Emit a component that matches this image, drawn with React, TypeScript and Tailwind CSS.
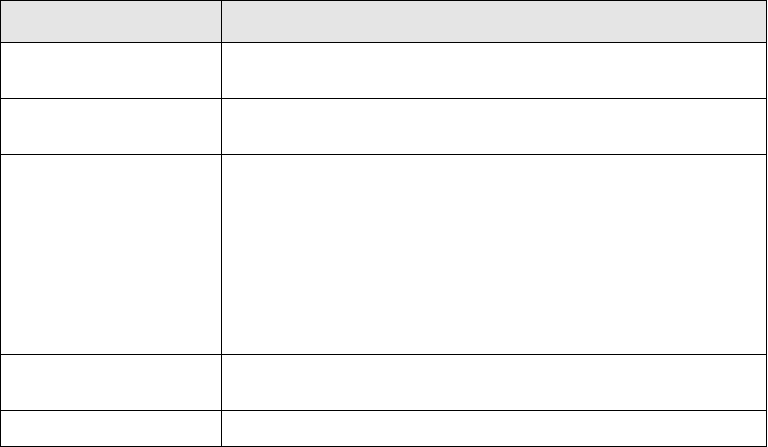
import React from "react"

const rows = [
    { h: "h-[56px]" },
    { h: "h-[56px]" },
    { h: "h-[200px]" },
    { h: "h-[56px]" },
    { h: "h-[36px]" },
]

export default function App() {
    return (
        <main className="w-[768px] h-[447px] bg-white" style={{ fontFamily: "'Liberation Sans', Arial, sans-serif" }}>
            <table className="border-collapse w-[767px] table-fixed">
                <colgroup>
                    <col className="w-[221px]" />
                    <col />
                </colgroup>
                <thead>
                    <tr className="h-[42px] bg-[#e5e5e5]">
                        <th className="border border-black"></th>
                        <th className="border border-black"></th>
                    </tr>
                </thead>
                <tbody>
                    {rows.map((r, i) => (
                        <tr key={i} className={r.h}>
                            <td className="border border-black"></td>
                            <td className="border border-black"></td>
                        </tr>
                    ))}
                </tbody>
            </table>
        </main>
    )
}
